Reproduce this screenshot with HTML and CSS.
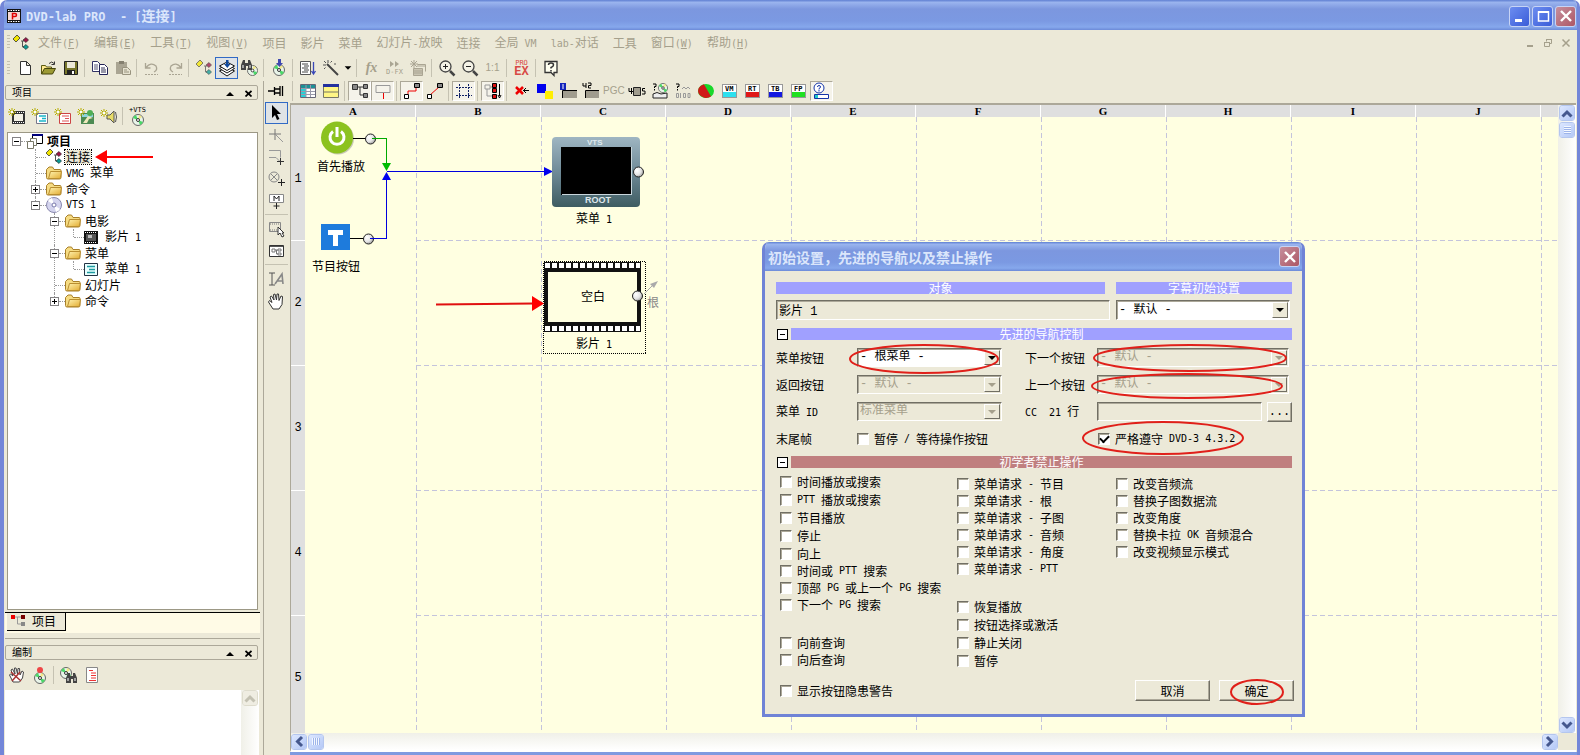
FILE: index.html
```html
<!DOCTYPE html>
<html lang="zh-CN">
<head>
<meta charset="utf-8">
<title>DVD-lab PRO</title>
<link rel="stylesheet" href="styles.css">
</head>
<body>
<svg class="defs" aria-hidden="true">
  <defs>
    <linearGradient id="gFolder" x1="0" y1="0" x2="1" y2="1"><stop offset="0" stop-color="#fff3b0"/><stop offset="1" stop-color="#e3ac32"/></linearGradient>
    <linearGradient id="gFrame" x1="0" y1="0" x2="0" y2="1"><stop offset="0" stop-color="#9fb6c2"/><stop offset=".5" stop-color="#6f8a97"/><stop offset="1" stop-color="#3e5c62"/></linearGradient>
    <radialGradient id="gBall" cx=".35" cy=".35" r=".7"><stop offset="0" stop-color="#fff"/><stop offset=".6" stop-color="#e4e4e4"/><stop offset="1" stop-color="#999"/></radialGradient>
    <symbol id="folder" viewBox="0 0 16 14"><path d="M.5 3.500v8q0 1.500 1.500 1.500h11.500q1.500 0 1.500-1.500v-7q0-1-1-1h-6l-1.500-2.500h-3.500z" fill="#f6dc83" stroke="#a87f28"/><path d="M2.500 12.500 4.500 5.500h11l-1 6q0 1-1.500 1z" fill="url(#gFolder)" stroke="#b98e30"/></symbol>
    <symbol id="links" viewBox="0 0 16 16"><path d="M8 6h3M9.500 6v6h2" stroke="#555" fill="none"/><path d="M0 4 4 0l3 3-4 4z" fill="#f2e500" stroke="#333" stroke-width=".8"/><path d="m10 5 3-2.500 2.500 2.500-2.500 2.500z" fill="#9b1547" stroke="#222" stroke-width=".6"/><path d="m10 12 3-2.500 2.500 2.500-2.500 2.500z" fill="#0b9a94" stroke="#222" stroke-width=".6"/></symbol>
    <symbol id="spark" viewBox="0 0 8 8"><path d="M4 0v8M0 4h8M1 1l6 6M7 1 1 7" stroke="#b5ad00" fill="none"/><path d="M3 3h2v2h-2z" fill="#fff"/></symbol>
    <symbol id="disc" viewBox="0 0 12 12"><circle cx="6" cy="6" r="5.500" fill="#e9f4e9" stroke="#666"/><path d="M6 6 1 4a5 5 0 0 1 3-3zM6 6l5 2a5 5 0 0 1-3 3z" fill="#4bd868"/><path d="M6 6 7 1a5 5 0 0 1 3 2z" fill="#f3e98a"/><circle cx="6" cy="6" r="1.500" fill="#fff" stroke="#333"/></symbol>
    <symbol id="cup" viewBox="0 0 8 6"><path d="M1 5 4 2l3 3" fill="none" stroke="currentColor" stroke-width="2"/></symbol>
    <symbol id="binoc" viewBox="0 0 12 10"><path d="M2 0h2v3h3V0h2l2 5v5H7V6H5v4H0V5z" fill="#444"/><path d="M2 5v3M9 5v3" stroke="#fff"/></symbol>
  </defs>
</svg>

<div class="window">
  <header class="titlebar">
    <svg class="app-icon" width="14" height="14" viewBox="0 0 14 14"><path d="M0 0h14v14H0z" fill="#111"/><path d="M1 1.500h12M1 12.500h12" stroke="#fff" stroke-dasharray="1.500 1"/><path d="M1 3h12v8H1z" fill="#f5d9d5"/><path d="M5.500 10.500v-6h2.500q1.500 0 1.500 1.500t-1.500 1.500h-2.500" fill="none" stroke="#d00" stroke-width="1.500"/></svg>
    <h1 class="caption"><span class="en">DVD-lab PRO&nbsp; - [</span>连接<span class="en">]</span></h1>
    <div class="sysbuttons">
      <button class="sys" aria-label="最小化"><svg width="18" height="18" viewBox="0 0 18 18"><path d="M4 12h7v3H4z" fill="#fff"/></svg></button>
      <button class="sys" aria-label="最大化"><svg width="18" height="18" viewBox="0 0 18 18"><path d="M4.500 5h10v9h-10zM4 5h11" fill="none" stroke="#fff" stroke-width="1.500"/><path d="M4 4h11v2H4z" fill="#fff"/></svg></button>
      <button class="sys sys-close" aria-label="关闭"><svg width="18" height="18" viewBox="0 0 18 18"><path d="m4 4 10 10M14 4 4 14" stroke="#fff" stroke-width="2.400"/></svg></button>
    </div>
  </header>

  <nav class="menubar">
    <span class="grip"></span>
    <svg class="doc-icon" width="16" height="16"><use href="#links"/></svg>
    <button>文件<span class="en">(<u>F</u>)</span></button>
    <button>编辑<span class="en">(<u>E</u>)</span></button>
    <button>工具<span class="en">(<u>T</u>)</span></button>
    <button>视图<span class="en">(<u>V</u>)</span></button>
    <button>项目</button>
    <button>影片</button>
    <button>菜单</button>
    <button>幻灯片<span class="en">-</span>放映</button>
    <button>连接</button>
    <button>全局<span class="en"> VM</span></button>
    <button><span class="en">lab-</span>对话</button>
    <button>工具</button>
    <button>窗口<span class="en">(<u>W</u>)</span></button>
    <button>帮助<span class="en">(<u>H</u>)</span></button>
    <div class="mdi">
      <svg width="10" height="10" viewBox="0 0 10 10"><path d="M2 7h6v2H2z" fill="#a5a08c"/></svg>
      <svg width="10" height="10" viewBox="0 0 10 10"><path d="M1.500 4.500h5v4h-5zM3.500 3.500v-2h5v4h-2M1 4.500h6M3 1.500h6" fill="none" stroke="#a5a08c"/></svg>
      <svg width="10" height="10" viewBox="0 0 10 10"><path d="m1.500 1.500 7 7M8.500 1.500l-7 7" stroke="#a5a08c" stroke-width="1.500"/></svg>
    </div>
  </nav>

  <div class="toolbar main-tools">
    <span class="grip"></span>
    <button class="tb" aria-label="新建"><svg viewBox="0 0 18 18"><path d="M4.500 2.500h6l4 4v9h-10zM10.500 2.500v4h4" fill="#fff" stroke="#333"/></svg></button>
    <button class="tb" aria-label="打开"><svg viewBox="0 0 18 18"><path d="M2.500 15V6.500h4l1 1.500h5v2" fill="#ffe98e" stroke="#5a5a10"/><path d="m2.500 15 3-5.500h11l-3 5.500z" fill="#9c9a34" stroke="#44440a"/><path d="M10 4.500q3-3 5 0M15.500 2.500v3h-3" fill="none" stroke="#333"/></svg></button>
    <button class="tb" aria-label="保存"><svg viewBox="0 0 18 18"><path d="M2.500 2.500h13v13h-13z" fill="#77762a" stroke="#222"/><path d="M5 3h8v6H5z" fill="#ece9d8"/><path d="M5 11h8v4H5z" fill="#222"/><path d="M10 12h2v3h-2z" fill="#fff"/></svg></button>
    <span class="sep"></span>
    <button class="tb" aria-label="复制"><svg viewBox="0 0 18 18"><path d="M1.500 2.500h5l3 3v7h-8z" fill="#fff" stroke="#336"/><path d="M3 6h4M3 8h4M3 10h4" stroke="#557"/><path d="M8.500 5.500h5l3 3v7h-8z" fill="#fff" stroke="#225"/><path d="M10 9h4M10 11h5M10 13h5" stroke="#335"/></svg></button>
    <button class="tb" aria-label="粘贴"><svg viewBox="0 0 18 18"><path d="M2 3h11v12H2z" fill="#aaa593"/><path d="M5 2h5v3H5z" fill="#858070"/><path d="M8.500 8.500h5l3 3v4h-8z" fill="#e6e2d0" stroke="#98937f"/><path d="M10 11h3M10 13h5" stroke="#98937f"/></svg></button>
    <span class="sep"></span>
    <button class="tb" aria-label="撤销"><svg viewBox="0 0 18 18"><path d="M2.500 4v5h5M3 8.500q5-6 10-1.500 2 4-2 6" fill="none" stroke="#aaa593" stroke-width="1.300"/><path d="M2 15.500h13" stroke="#aaa593" stroke-dasharray="2 1"/></svg></button>
    <button class="tb" aria-label="重做"><svg viewBox="0 0 18 18"><path d="M15.500 4v5h-5M15 8.500q-5-6-10-1.500-2 4 2 6" fill="none" stroke="#aaa593" stroke-width="1.300"/><path d="M3 15.500h13" stroke="#aaa593" stroke-dasharray="2 1"/></svg></button>
    <span class="sep"></span>
    <button class="tb" aria-label="连接"><svg viewBox="-1 -1 18 18"><use href="#links" width="16" height="16" opacity=".75"/></svg></button>
    <button class="tb active" aria-label="编译"><svg viewBox="0 0 18 18"><path d="m1.500 12 7.500-4 7.500 4L9 17z" fill="#fff" stroke="#111"/><path d="m1.500 9.500 7.500-4 7.500 4L9 14z" fill="#fff" stroke="#111"/><path d="m1.500 7 7.500-4 7.500 4L9 11.500z" fill="#fff" stroke="#111"/><path d="M8 1h2.500v4h2L9.300 9 6 5h2z" fill="#114a9e"/></svg></button>
    <button class="tb" aria-label="查看光盘"><svg viewBox="0 0 18 18"><use href="#disc" x="6" y="6" width="11" height="11"/><use href="#binoc" x="0" y="1" width="12" height="10"/></svg></button>
    <span class="sep"></span>
    <button class="tb" aria-label="刻录"><svg viewBox="0 0 18 18"><use href="#disc" x="3" y="5" width="12" height="12"/><path d="M8 0h3v4h2L9.500 8 6 4h2z" fill="#3f49b0"/></svg></button>
    <span class="sep"></span>
    <button class="tb" aria-label="列表"><svg viewBox="0 0 18 18"><path d="M1.500 2.500h10v13h-10z" fill="#fff" stroke="#555"/><path d="M3 5h6M5 7h5M3 9h6M5 11h5M3 13h6" stroke="#444"/><path d="M14.500 3v11M12.500 12l2 3 2-3" fill="none" stroke="#3a48b8" stroke-width="1.300"/></svg></button>
    <button class="tb" aria-label="向导"><svg viewBox="0 0 18 18"><path d="m5 5 11 11" stroke="#444" stroke-width="2"/><path d="M6 1v3M1 6h3M2 2l2 2M10 2 8.500 3.500M2 10l1.500-1.500M12 5h2" stroke="#555"/></svg></button>
    <button class="tb drop" aria-label="更多"><svg viewBox="0 0 12 18"><path d="M2 7h8l-4 4z" fill="#000"/></svg></button>
    <span class="sep"></span>
    <button class="tb gl"><em>fx</em></button>
    <button class="tb stack gl"><svg viewBox="0 0 12 8"><path d="M1 1v6l4-3zM6 1v6l4-3z" fill="#aaa593"/></svg><small>D-FX</small></button>
    <button class="tb" aria-label="新效果"><svg viewBox="0 0 18 18"><path d="M4.500 9.500h9v7h-9z" fill="#c9c4b2" stroke="#aaa593"/><path d="M8.500 5.500h8v7" fill="none" stroke="#aaa593"/><path d="M5 12h8M5 14h8M8 7h8" stroke="#aaa593"/><path d="M5 1v8M1 5h8M2 2l6 6M8 2 2 8" stroke="#aaa593"/></svg></button>
    <span class="sep"></span>
    <button class="tb" aria-label="放大"><svg viewBox="0 0 18 18"><circle cx="7.500" cy="7.500" r="5.500" fill="#f4f2e6" stroke="#444" stroke-width="1.300"/><path d="m12 12 4.500 4.500" stroke="#444" stroke-width="2.500"/><path d="M5 7.500h5M7.500 5v5" stroke="#222"/></svg></button>
    <button class="tb" aria-label="缩小"><svg viewBox="0 0 18 18"><circle cx="7.500" cy="7.500" r="5.500" fill="#f4f2e6" stroke="#444" stroke-width="1.300"/><path d="m12 12 4.500 4.500" stroke="#444" stroke-width="2.500"/><path d="M5 7.500h5" stroke="#222"/></svg></button>
    <button class="tb gl">1:1</button>
    <span class="sep"></span>
    <button class="tb stack ex"><small>PRO</small><b>EX</b></button>
    <span class="sep"></span>
    <button class="tb" aria-label="帮助"><svg viewBox="0 0 18 18"><path d="M3 2.500h12v11h-3v3l-3-3H3z" fill="#fffff0" stroke="#333" stroke-width="1.300"/><path d="M6.500 6q0-2 2.500-2t2.500 2q0 1.500-2.500 2.500v1M9 11v1.500" fill="none" stroke="#333" stroke-width="1.500"/></svg></button>
  </div>

  <div class="workspace">
    <aside class="dock">
      <div class="dock-head"><h2>项目</h2><svg width="8" height="5" viewBox="0 0 8 5"><path d="M0 5 4 1l4 4z"/></svg><svg width="7" height="7" viewBox="0 0 7 7"><path d="m.5 1 6 5.500M6.500 1l-6 5.500" stroke="#000" stroke-width="1.700"/></svg></div>
      <div class="toolbar dock-tools">
        <button class="tb" aria-label="新建影片"><svg viewBox="0 0 18 18"><path d="M4 4h13v13H4z" fill="#333"/><path d="M5 5.500h11M5 15.500h11" stroke="#fff" stroke-dasharray="1 1"/><path d="M6 7h9v7H6z" fill="#f4f2e6"/><use href="#spark" x="0" y="1" width="8" height="8"/></svg></button>
        <button class="tb" aria-label="新建菜单"><svg viewBox="0 0 18 18"><path d="M5.500 6.500h11v10h-11z" fill="#fff" stroke="#778"/><path d="M8 9h7M11 11.500h4M8 14h7" stroke="#1ab5c9" stroke-width="1.500"/><use href="#spark" x="0" y="1" width="8" height="8"/></svg></button>
        <button class="tb" aria-label="新建命令"><svg viewBox="0 0 18 18"><path d="M5.500 6.500h11v10h-11z" fill="#fff" stroke="#c44"/><path d="M8 9h7M11 11.500h4M8 14h7" stroke="#d55"/><use href="#spark" x="0" y="1" width="8" height="8"/></svg></button>
        <button class="tb" aria-label="新建幻灯片"><svg viewBox="0 0 18 18"><path d="M4 6h13v11H4z" fill="#4c8a52"/><path d="M5 7h11v3H5z" fill="#8fd3dc"/><path d="m6 16 5-7 5 2-4 1-2 4z" fill="#efe9bc"/><circle cx="13" cy="6" r="3" fill="#4fae55"/><use href="#spark" x="0" y="1" width="8" height="8"/></svg></button>
        <button class="tb" aria-label="新建音频"><svg viewBox="0 0 18 18"><path d="M7 8h3l4-4v12l-4-4H7z" fill="#e8dc68" stroke="#555"/><path d="M15.500 5q2 5 0 10" fill="none" stroke="#555"/><use href="#spark" x="0" y="2" width="8" height="8"/></svg></button>
        <span class="sep"></span>
        <button class="tb stack vts"><small>+VTS</small><svg viewBox="0 0 12 12"><use href="#disc" width="12" height="12"/></svg></button>
      </div>
      <div class="tree">
        <ul>
          <li><div class="row"><span class="tog"></span><svg width="16" height="16" viewBox="0 0 16 16"><path d="M5.500 1.500h10v9h-10z" fill="#fff" stroke="#000"/><path d="M5 1h11v2H5z" fill="#00007b"/><path d="M3.500 5.500h6v7h-6z" fill="#fff" stroke="#776"/><path d="M.5 8.500h6v7h-6z" fill="#fff" stroke="#776"/></svg><b>项目</b></div>
            <ul>
              <li><div class="row"><span class="tog none"></span><svg width="16" height="16"><use href="#links"/></svg><span class="sel">连接</span></div></li>
              <li><div class="row"><span class="tog none"></span><svg width="16" height="14"><use href="#folder"/></svg><span><span class="en">VMG </span>菜单</span></div></li>
              <li><div class="row"><span class="tog plus"></span><svg width="16" height="14"><use href="#folder"/></svg><span>命令</span></div></li>
              <li><div class="row"><span class="tog"></span><svg width="16" height="16" viewBox="0 0 16 16"><circle cx="8" cy="8" r="7.500" fill="#d4d4ee" stroke="#8887ad"/><path d="M8 8 2 4a7 7 0 0 1 4-3zM8 8l6 4a7 7 0 0 1-4 3z" fill="#fff"/><circle cx="8" cy="8" r="2" fill="#fff" stroke="#77a"/></svg><span class="en">VTS 1</span></div>
                <ul>
                  <li><div class="row"><span class="tog"></span><svg width="16" height="14"><use href="#folder"/></svg><span>电影</span></div>
                    <ul><li><div class="row"><span class="tog none"></span><svg width="14" height="13" viewBox="0 0 14 13"><path d="M0 0h14v13H0z" fill="#111"/><path d="M1 1.500h12M1 11.500h12" stroke="#fff" stroke-dasharray="1 1"/><path d="M2 3h10v7H2z" fill="#555"/><path d="M4 4h4v3H4z" fill="#bbb"/></svg><span class="far">影片<span class="en"> 1</span></span></div></li></ul></li>
                  <li><div class="row"><span class="tog"></span><svg width="16" height="14"><use href="#folder"/></svg><span>菜单</span></div>
                    <ul><li><div class="row"><span class="tog none"></span><svg width="14" height="13" viewBox="0 0 14 13"><path d="M.5.5h13v12H.5z" fill="#e9ffff" stroke="#234"/><path d="M3 3.500h8M5 6.500h6M3 9.500h8" stroke="#1d9aa0" stroke-width="1.500"/></svg><span class="far">菜单<span class="en"> 1</span></span></div></li></ul></li>
                  <li><div class="row"><span class="tog none"></span><svg width="16" height="14"><use href="#folder"/></svg><span>幻灯片</span></div></li>
                  <li><div class="row"><span class="tog plus"></span><svg width="16" height="14"><use href="#folder"/></svg><span>命令</span></div></li>
                </ul>
              </li>
            </ul>
          </li>
        </ul>
        <svg class="tree-arrow" width="60" height="16" viewBox="0 0 60 16"><path d="M10 8h49" stroke="#f00" stroke-width="2"/><path d="M1 8 13 1v14z" fill="#f00"/></svg>
      </div>
      <div class="tabs"><button class="tab"><svg width="15" height="12" viewBox="0 0 15 12"><path d="M3 2h8M6.500 2v7H11" fill="none" stroke="#999"/><path d="M0 0h4v4H0z" fill="#e00"/><path d="M10 0h4v4h-4z" fill="#700"/><path d="M10 7h4v4h-4z" fill="#888"/></svg>项目</button></div>
      <div class="splitter"></div>
      <div class="dock-head"><h2>编制</h2><svg width="8" height="5" viewBox="0 0 8 5"><path d="M0 5 4 1l4 4z"/></svg><svg width="7" height="7" viewBox="0 0 7 7"><path d="m.5 1 6 5.500M6.500 1l-6 5.500" stroke="#000" stroke-width="1.700"/></svg></div>
      <div class="toolbar dock-tools log-tools">
        <button class="tb" aria-label="停止"><svg viewBox="0 0 18 18"><path d="M5 16 1.500 9l1-1L5 10 3 4l1.500-1L7 8 6.500 2H8l1.500 6L10 2.500h1.500L12 9l2-4 1.500 1-1 6-3 4z" fill="#fff" stroke="#444"/><path d="m3 6 10 9M12 6l-8 9" stroke="#a33" stroke-width="1.500"/></svg></button>
        <button class="tb" aria-label="刻录"><svg viewBox="0 0 18 18"><use href="#disc" x="3" y="6" width="12" height="12"/><circle cx="9" cy="4" r="3" fill="#ee4646"/></svg></button>
        <span class="sep"></span>
        <button class="tb" aria-label="检查"><svg viewBox="0 0 18 18"><use href="#disc" x="0" y="1" width="12" height="12"/><use href="#binoc" x="6" y="7" width="12" height="10"/></svg></button>
        <button class="tb" aria-label="日志"><svg viewBox="0 0 18 18"><path d="M3.500 1.500h11v15h-11z" fill="#fff" stroke="#888"/><path d="M6 4.500h4M8 7h5M8 9.500h5M8 12h5M6 14.500h7" stroke="#e33"/></svg></button>
      </div>
      <div class="log"><div class="log-body"></div><div class="vscroll off"><button class="sb off" aria-label="向上"><svg width="12" height="9"><use href="#cup"/></svg></button></div></div>
    </aside>

    <div class="vtools">
      <button class="vb pin" aria-label="固定"><svg viewBox="0 0 18 18"><path d="M1 9h6M7.500 5v8M7 7h6M7 11h6M13 4v10M15.500 4v10" stroke="#000" stroke-width="1.300" fill="none"/></svg></button>
      <button class="vb active" aria-label="选择"><svg viewBox="0 0 18 18"><path d="M5 1v13l3-3 2 5 2.500-1-2.500-5h4z" fill="#000"/></svg></button>
      <button class="vb" aria-label="点"><svg viewBox="0 0 18 18"><path d="M8 3v11M2 8h12" stroke="#777"/><path d="m9 9 7 7" stroke="#999"/></svg></button>
      <button class="vb" aria-label="框"><svg viewBox="0 0 18 18"><path d="M2 2.500h11.500v7M2 9.500h7l4 4" fill="none" stroke="#999"/><path d="M13.500 10v7M10 13.500h7" stroke="#333"/></svg></button>
      <button class="vb" aria-label="圆"><svg viewBox="0 0 18 18"><circle cx="7" cy="7" r="5" fill="none" stroke="#888"/><path d="m4 4 6 6M10 4l-6 6" stroke="#888"/><path d="M14.500 9v7M11 12.500h7" stroke="#222"/></svg></button>
      <button class="vb" aria-label="菜单"><svg viewBox="0 0 18 18"><path d="M2.500 2.500h14v8h-14z" fill="#fff" stroke="#888"/><path d="M7 9V4l2.500 3L12 4v5" fill="none" stroke="#222"/><path d="M9.500 11v6M6.500 14h6" stroke="#222"/></svg></button>
      <span class="hsep"></span>
      <button class="vb" aria-label="影片"><svg viewBox="0 0 18 18"><path d="M2.500 2.500h11v9h-11z" fill="none" stroke="#888"/><path d="M3 4h10M3 10h10" stroke="#777" stroke-dasharray="1 1"/><path d="M11 7v8l2-2 2 4 2-1-2-3h2z" fill="#fff" stroke="#333"/></svg></button>
      <button class="vb" aria-label="窗口"><svg viewBox="0 0 18 18"><path d="M2.500 3.500h14v11h-14z" fill="#fff" stroke="#333"/><path d="M3 4.500h13" stroke="#555"/><path d="M5 7h3v3H5zM11 7h3v2h-3zM11 11h3v2h-3zM8 8h3M9.500 8v4H11" fill="none" stroke="#777"/></svg></button>
      <span class="hsep"></span>
      <button class="vb" aria-label="文字"><svg viewBox="0 0 18 18"><path d="M2 3h6M5 3v12M2 15h6" stroke="#555" fill="none"/><path d="m8 14 7-10 1 10M10 11h6" stroke="#888" stroke-width="1.600" fill="none"/></svg></button>
      <button class="vb" aria-label="抓手"><svg viewBox="0 0 18 18"><path d="M6 17 1.500 10l1-1.500L5 10.500 3 5l1.500-1L7 8 6.500 2.500 8 2l1.500 6 .5-6h1.500L12 8.500l2-4.500 1.500.5-.5 8-3 4.500z" fill="#fff" stroke="#333"/></svg></button>
    </div>

    <main class="editor">
      <div class="toolbar link-tools">
        <span class="sep"></span>
        <button class="tb" aria-label="表格"><svg viewBox="0 0 18 18"><path d="M1.500 2.500h15v13h-15z" fill="#fff" stroke="#667"/><path d="M2 3h5v12H2z" fill="#29cfd6"/><path d="M2 3h14v3H2z" fill="#1c8f95"/><path d="M2 6.500h14M2 9.500h14M2 12.500h14M7 3v12M11.500 3v12" stroke="#99a"/></svg></button>
        <button class="tb" aria-label="行"><svg viewBox="0 0 18 18"><path d="M1.500 2.500h15v13h-15z" fill="#fff685" stroke="#776"/><path d="M1 2h16v3H1z" fill="#23309e"/><path d="M2 10h14" stroke="#776"/></svg></button>
        <span class="sep"></span>
        <button class="tb pressed" aria-label="树"><svg viewBox="0 0 18 18"><path d="M5 5h8M9 5v8h4" fill="none" stroke="#333"/><path d="M1.500 2.500h5v5h-5zM12.500 2.500h4v4h-4zM12.500 11.500h4v4h-4z" fill="#888" stroke="#333"/></svg></button>
        <button class="tb pressed" aria-label="框"><svg viewBox="0 0 18 18"><path d="M2 3.500h14v7H2z" fill="none" stroke="#999"/><path d="M9.500 11v6" stroke="#e00"/></svg></button>
        <span class="sep"></span>
        <button class="tb pressed" aria-label="折线"><svg viewBox="0 0 18 18"><path d="M5 12V9h8V6" fill="none" stroke="#e00"/><path d="M1.500 12.500h4v4h-4z" fill="#fff" stroke="#000"/><path d="M11.500 1.500h5v4h-5z" fill="#888" stroke="#000"/></svg></button>
        <button class="tb" aria-label="直线"><svg viewBox="0 0 18 18"><path d="m4 13 9-8" stroke="#e00"/><path d="M1.500 12.500h4v4h-4z" fill="#fff" stroke="#000"/><path d="M11.500 1.500h5v4h-5z" fill="#888" stroke="#000"/></svg></button>
        <span class="sep"></span>
        <button class="tb pressed" aria-label="网格"><svg viewBox="0 0 18 18"><path d="M1 5.500h16M1 13.500h16M4.500 2v15M13.500 2v15" stroke="#126" stroke-dasharray="2 1"/></svg></button>
        <span class="sep"></span>
        <button class="tb pressed" aria-label="对齐"><svg viewBox="0 0 18 18"><path d="M1 3h5v4H1zM3 7v7h5M6 5h4" fill="none" stroke="#999"/><path d="M8.500 1.500h4v4h-4zM8.500 6.500h4v4h-4zM8.500 12.500h4v4h-4z" fill="#d11" stroke="#000"/><path d="M15.500 2v12M14 13l1.500 3 1.500-3" stroke="#000" fill="none"/></svg></button>
        <span class="sep"></span>
        <button class="tb" aria-label="删除"><svg viewBox="0 0 18 18"><path d="m3 5 7 7M10 5l-7 7" stroke="#e00" stroke-width="2.500"/><path d="M10 8.500h6M13 6l-2.500 2.500L13 11" stroke="#000" fill="none"/></svg></button>
        <button class="tb" aria-label="颜色"><svg viewBox="0 0 18 18"><path d="M1 2h9v9H1z" fill="#00e"/><path d="M9 9h8v8H9z" fill="#fe0"/></svg></button>
        <button class="tb" aria-label="编号"><svg viewBox="0 0 18 18"><path d="M1 1h6v7H1z" fill="#12b"/><path d="M4 2v5" stroke="#fff"/><path d="M4 9h14v7H4z" fill="#a09c8e"/><path d="M3.500 16V8.500H18" fill="none" stroke="#000"/></svg></button>
        <button class="tb" aria-label="数量"><svg viewBox="0 0 18 18"><path d="M1 1v3h3M4 1v5M6 1h3v2.500H6.500V6H9" fill="none" stroke="#000"/><path d="M4 9h13v7H4z" fill="#a09c8e"/><path d="M3.500 16V8.500H17" fill="none" stroke="#000"/></svg></button>
        <button class="tb gl">PGC</button>
        <button class="tb" aria-label="端口"><svg viewBox="0 0 18 18"><path d="M5.500 5.500h7v8h-7z" fill="#a09c8e" stroke="#222"/><path d="M3.500 6v6M1 6v3.500h4M17 6.500h-2.500v2.500H17v3h-3" fill="none" stroke="#000"/></svg></button>
        <button class="tb" aria-label="光驱"><svg viewBox="0 0 18 18"><use href="#disc" x="7" y="1" width="10" height="10"/><path d="M2 12q4-3 8 0l6-1v5H2z" fill="#eee" stroke="#222"/><path d="M2 2h3v2.500H3.500V6M3.500 7v1.500" fill="none" stroke="#000"/></svg></button>
        <button class="tb" aria-label="寄存器"><svg viewBox="0 0 18 18"><path d="M2 2h3v2.500H3.500V6M3.500 7v1.500" fill="none" stroke="#000"/><path d="M2.500 11.500h2v4h-2zM6.500 11v5M9.500 11.500h2v4h-2zM14 11.500h2v4h-2zM8 7l2-2 2 2 2-2 2 2" fill="none" stroke="#999"/></svg></button>
        <button class="tb" aria-label="状态"><svg viewBox="0 0 18 18"><ellipse cx="9" cy="9" rx="8" ry="7" fill="#18d82a"/><path d="M14 14.500A8 7 0 1 1 7 2.200z" fill="#d01818"/></svg></button>
        <button class="tb chip c-vm"><span>VM</span></button>
        <button class="tb chip c-rt"><span>RT</span></button>
        <button class="tb chip c-tb"><span>TB</span></button>
        <button class="tb chip c-fp"><span>FP</span></button>
        <button class="tb pressed" aria-label="提示"><svg viewBox="0 0 18 18"><circle cx="7" cy="6" r="5" fill="#fff" stroke="#1535a8"/><path d="M5.500 5q0-1.500 1.500-1.500T8.500 5Q8.500 6 7 6.500v1M7 8v1.500" fill="none" stroke="#1535a8"/><path d="M2.500 12.500h14v4h-14z" fill="#fff" stroke="#1535a8"/><path d="M3 13h3v3H3z" fill="#2cc"/></svg></button>
      </div>
      <div class="sheet">
        <div class="ruler-x"><span>A</span><span>B</span><span>C</span><span>D</span><span>E</span><span>F</span><span>G</span><span>H</span><span>I</span><span>J</span></div>
        <div class="ruler-y"><span>1</span><span>2</span><span>3</span><span>4</span><span>5</span></div>
        <div class="canvas">
          <svg class="graph">
            <g transform="translate(-305 -117)">
              <g stroke="#c4c4dc" stroke-dasharray="5 3">
                <path d="M416.500 117V1200M541.500 117V1200M666.500 117V1200M791.500 117V1200M916.500 117V1200M1041.500 117V1200M1166.500 117V1200M1291.500 117V1200M1416.500 117V1200M1541.500 117V1200"/>
                <path d="M416 240.500H3000M416 365.500H3000M416 490.500H3000M416 615.500H3000"/>
              </g>
              <circle cx="338" cy="138.500" r="16" fill="#777" opacity=".4"/>
              <circle cx="337" cy="137.500" r="16" fill="#8cc21f"/>
              <path d="M333 131.500a7 7 0 1 0 8 0M337 127v10" fill="none" stroke="#fff" stroke-width="3"/>
              <path d="M353 138.500h14M350 238.500h15" stroke="#000"/>
              <circle cx="370.500" cy="139" r="5" fill="url(#gBall)" stroke="#222"/>
              <circle cx="368.500" cy="239" r="5" fill="url(#gBall)" stroke="#222"/>
              <g shape-rendering="crispEdges">
                <path d="M372 138.500h14.500V164" fill="none" stroke="#0a0"/>
                <path d="M370 238.500h16.500V178M387 171.500h158" fill="none" stroke="#00d"/>
              </g>
              <path d="M382 163h9l-4.500 8z" fill="#0b0"/>
              <path d="M382 180h9l-4.500-8zM544 167v9l9-4.500z" fill="#00e"/>
              <path d="M321 224h29v26h-29z" fill="#1e7bdc"/>
              <path d="M328 230h15v5h-5v11h-5v-11h-5z" fill="#fff"/>
              <text x="317" y="171">首先播放</text>
              <text x="312" y="271">节目按钮</text>
              <rect x="552" y="137" width="88" height="70" rx="4" fill="url(#gFrame)"/>
              <path d="M561 147h71v48h-71z" fill="#000"/>
              <path d="M631.500 147v48M562 194.500h70" fill="none" stroke="#c9d6dc"/>
              <text class="cap" x="587" y="145">VTS</text>
              <text class="cap root" x="585" y="203">ROOT</text>
              <circle cx="638.500" cy="172" r="5" fill="url(#gBall)" stroke="#222"/>
              <text x="576" y="223">菜单<tspan class="en" xml:space="preserve"> 1</tspan></text>
              <path d="M543.500 261.500h102v92h-102z" fill="none" stroke="#000" stroke-dasharray="1 1" shape-rendering="crispEdges"/>
              <path d="M544 262h97v70h-97z" fill="#111"/>
              <path d="M545 265.500h95M545 328.500h95" stroke="#fff" stroke-width="5" stroke-dasharray="5 2"/>
              <path d="M548 272h89v50h-89z" fill="#ffffe1"/>
              <circle cx="637.500" cy="296" r="5" fill="url(#gBall)" stroke="#222"/>
              <path d="m644 294 8-8" stroke="#aaa"/><path d="m658 281-8 3 4 4z" fill="#aaa"/>
              <text x="581" y="301">空白</text>
              <text class="gray" x="647" y="307">根</text>
              <text x="576" y="348">影片<tspan class="en" xml:space="preserve"> 1</tspan></text>
              <path d="m436 304.500 98-1" stroke="#e01010" stroke-width="2"/>
              <path d="M532 296v15l12-7.500z" fill="#f00"/>
            </g>
          </svg>
        </div>
        <div class="vscroll">
          <button class="sb" aria-label="向上"><svg width="12" height="9"><use href="#cup"/></svg></button>
          <span class="thumb"></span>
          <span class="grow"></span>
          <button class="sb down" aria-label="向下"><svg width="12" height="9"><use href="#cup"/></svg></button>
        </div>
        <div class="hscroll">
          <button class="sb left" aria-label="向左"><svg width="12" height="9"><use href="#cup"/></svg></button>
          <span class="thumb h"></span>
          <span class="grow"></span>
          <button class="sb right" aria-label="向右"><svg width="12" height="9"><use href="#cup"/></svg></button>
        </div>
      </div>
    </main>
  </div>
</div>

<form class="dialog" onsubmit="return false">
  <div class="dlg-title"><h2>初始设置，先进的导航以及禁止操作</h2>
    <button type="button" class="sys sys-close" aria-label="关闭"><svg width="18" height="18" viewBox="0 0 18 18"><path d="m4 4 10 10M14 4 4 14" stroke="#fff" stroke-width="2.400"/></svg></button></div>
  <div class="dlg-body">
    <div class="top-grid">
      <label class="band" for="obj">对象</label><label class="band" for="sub">字幕初始设置</label>
      <input id="obj" class="field" value="影片 1" readonly>
      <span class="combo"><select id="sub"><option>- 默认 -</option></select><i class="arrow"></i></span>
    </div>
    <div class="section"><button type="button" class="fold" aria-label="折叠"></button><h3 class="band">先进的导航控制</h3></div>
    <div class="nav-grid">
      <label for="f1">菜单按钮</label>
      <span class="combo"><select id="f1"><option>- 根菜单 -</option></select><i class="arrow"></i></span>
      <label for="f2" class="r">下一个按钮</label>
      <span class="combo dis wide"><select id="f2" disabled><option>- 默认 -</option></select><i class="arrow"></i></span>
      <label for="f3">返回按钮</label>
      <span class="combo dis"><select id="f3" disabled><option>- 默认 -</option></select><i class="arrow"></i></span>
      <label for="f4" class="r">上一个按钮</label>
      <span class="combo dis wide"><select id="f4" disabled><option>- 默认 -</option></select><i class="arrow"></i></span>
      <label for="f5">菜单<span class="en"> ID</span></label>
      <span class="combo dis"><select id="f5" disabled><option>标准菜单</option></select><i class="arrow"></i></span>
      <label for="f6" class="r"><span class="en">CC&nbsp; 21 </span>行</label>
      <span class="cc"><input id="f6" class="field"><button type="button" class="btn dots">...</button></span>
      <span>末尾帧</span>
      <label class="ck"><input type="checkbox">暂停<span class="en"> / </span>等待操作按钮</label>
      <span></span>
      <label class="ck strict"><input type="checkbox" checked>严格遵守<span class="en"> DVD-3 4.3.2</span></label>
    </div>
    <div class="section"><button type="button" class="fold" aria-label="折叠"></button><h3 class="band red">初学者禁止操作</h3></div>
    <div class="ops">
      <div class="col c1">
        <div class="grp roomy">
          <label class="ck"><input type="checkbox">时间播放或搜索</label>
          <label class="ck"><input type="checkbox"><span class="en">PTT </span>播放或搜索</label>
          <label class="ck"><input type="checkbox">节目播放</label>
          <label class="ck"><input type="checkbox">停止</label>
        </div>
        <div class="grp">
          <label class="ck"><input type="checkbox">向上</label>
          <label class="ck"><input type="checkbox">时间或<span class="en"> PTT </span>搜索</label>
          <label class="ck"><input type="checkbox">顶部<span class="en"> PG </span>或上一个<span class="en"> PG </span>搜索</label>
          <label class="ck"><input type="checkbox">下一个<span class="en"> PG </span>搜索</label>
        </div>
        <div class="grp apart">
          <label class="ck"><input type="checkbox">向前查询</label>
          <label class="ck"><input type="checkbox">向后查询</label>
        </div>
      </div>
      <div class="col">
        <div class="grp">
          <label class="ck"><input type="checkbox">菜单请求<span class="en"> - </span>节目</label>
          <label class="ck"><input type="checkbox">菜单请求<span class="en"> - </span>根</label>
          <label class="ck"><input type="checkbox">菜单请求<span class="en"> - </span>子图</label>
          <label class="ck"><input type="checkbox">菜单请求<span class="en"> - </span>音频</label>
          <label class="ck"><input type="checkbox">菜单请求<span class="en"> - </span>角度</label>
          <label class="ck"><input type="checkbox">菜单请求<span class="en"> - PTT</span></label>
        </div>
        <div class="grp roomy apart">
          <label class="ck"><input type="checkbox">恢复播放</label>
          <label class="ck"><input type="checkbox">按钮选择或激活</label>
          <label class="ck"><input type="checkbox">静止关闭</label>
          <label class="ck"><input type="checkbox">暂停</label>
        </div>
      </div>
      <div class="col">
        <div class="grp">
          <label class="ck"><input type="checkbox">改变音频流</label>
          <label class="ck"><input type="checkbox">替换子图数据流</label>
          <label class="ck"><input type="checkbox">改变角度</label>
          <label class="ck"><input type="checkbox">替换卡拉<span class="en"> OK </span>音频混合</label>
          <label class="ck"><input type="checkbox">改变视频显示模式</label>
        </div>
      </div>
    </div>
    <div class="actions">
      <label class="ck"><input type="checkbox">显示按钮隐患警告</label>
      <button type="button" class="btn">取消</button>
      <button type="submit" class="btn">确定</button>
    </div>
  </div>
  <svg class="marks" viewBox="762 242 543 475"><g fill="none" stroke="#e0201a" stroke-width="2"><ellipse cx="924" cy="359" rx="74" ry="14"/><ellipse cx="1190" cy="358" rx="96" ry="13"/><ellipse cx="1187" cy="386" rx="95" ry="12"/><ellipse cx="1163" cy="438" rx="80" ry="16"/><ellipse cx="1257" cy="692" rx="26" ry="12"/></g></svg>
</form>
</body>
</html>
```
FILE: styles.css
```css
* { box-sizing: border-box; }
body {
  margin: 0;
  background: #fff;
  color: #000;
  font: 12px/16px "Noto Sans CJK SC", sans-serif;
}
button, input, select { font: inherit; color: inherit; margin: 0; }
button { padding: 0; border: 0; background: none; }
h1, h2, h3, ul { margin: 0; padding: 0; font-size: inherit; font-weight: inherit; list-style: none; }
svg { display: block; flex: none; }
.defs { position: absolute; width: 0; height: 0; }
.en { font-family: "DejaVu Sans Mono", monospace; font-size: 10px; white-space: pre; }

.window {
  height: 100vh;
  display: flex;
  flex-direction: column;
  overflow: hidden;
  background: #ece9d8;
  border: solid #7386d8;
  border-width: 0 3px 0 4px;
  border-radius: 7px 7px 0 0;
}
.titlebar, .dlg-title {
  display: flex;
  align-items: center;
  background: linear-gradient(#5f7fd2, #9ab4ee 8%, #7c97df 30%, #7b99e2 70%, #86a8ec 90%, #6c8ad8);
  color: #dbe6fb;
}
.titlebar { flex: 0 0 30px; margin: 0 -3px 0 -4px; padding: 2px 4px 0 7px; gap: 5px; }
.caption { flex: 1; font-size: 14px; font-weight: bold; }
.caption .en { font-size: 12px; }
.sysbuttons { display: flex; gap: 2px; }
.sys {
  width: 21px;
  height: 21px;
  display: grid;
  place-items: center;
  border: 1px solid #c7d4f5;
  border-radius: 3px;
  background: linear-gradient(135deg, #6c8df0, #3a5cd8);
}
.sys-close { background: linear-gradient(135deg, #c68f9d, #ad5665); }

.menubar { flex: 0 0 25px; display: flex; align-items: center; padding-left: 3px; color: #a5a08c; }
.menubar button { padding: 0 7px; white-space: nowrap; }
.grip { width: 3px; height: 15px; margin-right: 3px; background: repeating-linear-gradient(#c5c1ae 0 1px, transparent 1px 3px); }
.mdi { margin-left: auto; padding-right: 6px; display: flex; gap: 8px; }
.doc-icon { margin-right: 2px; }

.toolbar { display: flex; align-items: center; }
.main-tools { flex: 0 0 26px; padding-left: 3px; }
.tb { flex: 0 0 23px; height: 22px; display: grid; place-items: center; border: 1px solid transparent; }
.tb svg { width: 18px; height: 18px; }
.tb.drop { flex-basis: 12px; }
.tb.drop svg { width: 10px; }
.tb.active, .vb.active { border-color: #316ac5; background: #dfe3e6; }
.tb.pressed { border-color: #aca899 #fff #fff #aca899; background: #f5f3ea; }
.sep { flex: 0 0 6px; height: 18px; background: linear-gradient(90deg, transparent 2px, #c5c2b2 2px 3px, transparent 3px); }
.gl { font: 10px/12px "Liberation Sans", sans-serif; color: #a5a08c; }
.gl em { font: italic bold 14px/14px "Liberation Serif", serif; }
.tb.stack { align-content: center; }
.stack small { font: 7px/8px "DejaVu Sans Mono", monospace; }
.stack.gl svg { width: 12px; height: 8px; }
.stack b { font: bold 12px/11px "Liberation Mono", monospace; }
.ex { color: #d84a44; }
.tb.vts svg { width: 12px; height: 12px; }
.chip span { width: 15px; height: 14px; border: 1px solid #999; background: linear-gradient(#fff 60%, var(--tone) 60%); font: bold 7px/8px "DejaVu Sans Mono", monospace; }
.c-vm { --tone: #2de0ee; }
.c-rt { --tone: #e01818; }
.c-tb { --tone: #1418e0; }
.c-fp { --tone: #20e020; }

.workspace { flex: 1; min-height: 0; display: grid; grid-template-columns: 259px 27px minmax(0, 1fr); }
.dock { min-height: 0; display: flex; flex-direction: column; padding: 4px 4px 0 1px; }
.dock-head {
  flex: 0 0 15px;
  display: flex;
  align-items: center;
  gap: 11px;
  padding: 2px 5px 0 6px;
  margin-right: 1px;
  border: 1px solid #aca899;
  border-radius: 2px;
}
.dock-head h2 { flex: 1; align-self: flex-start; font-size: 10px; line-height: 8px; }
.dock-tools { flex: 0 0 32px; }
.log-tools { flex-basis: 30px; }
.tree {
  position: relative;
  flex: 1;
  min-height: 0;
  margin: 0 1px 0 2px;
  padding-left: 4px;
  border: 1px solid #9c9885;
  background: #fff;
}
.tree ul ul { padding-left: 19px; }
.tree li { position: relative; }
.tree ul ul > li::before { content: ""; position: absolute; left: 4px; top: 0; bottom: 0; border-left: 1px dotted #999; }
.tree ul ul > li:last-child::before { bottom: auto; height: 8px; }
.row { display: flex; align-items: center; height: 16px; white-space: nowrap; }
.row svg { margin: 0 4px 0 6px; }
.row .far { padding-left: 3px; }
.tog, .fold {
  --bar: linear-gradient(#000, #000) center / 5px 1px no-repeat;
  position: relative;
  flex: 0 0 9px;
  height: 9px;
  border: 1px solid #848284;
  background: var(--bar), #fff;
}
.tog.plus { background: var(--bar), linear-gradient(#000, #000) center / 1px 5px no-repeat, #fff; }
.tog::after { content: ""; position: absolute; left: 8px; top: 3px; width: 6px; border-top: 1px dotted #999; }
.tog.none { border-color: transparent; background: none; }
.tog.none::after { left: 4px; width: 10px; }
.sel { outline: 1px dotted #000; background: #ece9d8; line-height: 14px; padding: 0 1px; margin-left: -1px; }
.tree-arrow { position: absolute; left: 86px; top: 16px; }
.tabs { flex: 0 0 21px; margin: 2px -1px 0 0; border-top: 1px solid #000; background: #fffbe6; padding-left: 2px; }
.tab { height: 18px; display: flex; align-items: center; gap: 6px; padding: 0 9px 2px 4px; background: #ece9d8; border: solid #000; border-width: 0 1px 1px 0; line-height: 14px; }
.splitter { flex: 0 0 1px; margin: 5px -1px 6px 0; background: #aca899; }
.log { flex: 0 0 65px; display: flex; background: #fff; }
.log-body { flex: 1; }

.vtools { display: flex; flex-direction: column; align-items: center; padding-right: 2px; border-left: 1px solid #aca899; }
.vb { flex: none; width: 23px; height: 22px; display: grid; place-items: center; border: 1px solid transparent; }
.vb svg { width: 18px; height: 18px; }
.vb.pin { height: 18px; margin-bottom: 3px; }
.hsep { flex: 0 0 6px; width: 23px; background: linear-gradient(transparent 2px, #c5c2b2 2px 3px, transparent 3px); }

.editor { min-width: 0; min-height: 0; display: flex; flex-direction: column; border-bottom: 3px solid #7f9ae0; }
.link-tools { flex: 0 0 22px; align-items: flex-start; }
.link-tools .tb, .link-tools .sep { height: 20px; }
.sheet {
  flex: 1;
  min-height: 0;
  display: grid;
  grid-template-columns: 14px minmax(0, 1fr) 18px;
  grid-template-rows: 12px minmax(0, 1fr) 17px;
  border: solid;
  border-width: 2px 0 2px 1px;
  border-color: #aca899 #fff #fff #aca899;
  margin-right: 1px;
}
.ruler-x, .ruler-y { display: flex; overflow: hidden; background: #dfdfdf; text-align: center; }
.ruler-x { grid-column: 1 / 3; font: bold 11px/13px "Liberation Serif", serif; }
.ruler-x span { flex: 0 0 125px; border-right: 1px solid #fff; }
.ruler-y { grid-column: 1; grid-row: 2; flex-direction: column; font: 12px/16px "Liberation Mono", monospace; }
.ruler-y span { flex: 0 0 125px; display: grid; place-items: center; border-bottom: 1px solid #fff; }
.ruler-y span:first-child { flex-basis: 124px; }
.canvas { background: #ffffe1; overflow: hidden; }
.graph { width: 100%; height: 100%; font-size: 12px; }
.graph .cap { font: bold 8px "Liberation Sans", sans-serif; fill: #dfe8ec; }
.graph .root { font-size: 9px; }
.graph .gray { fill: #888; }
.vscroll { width: 18px; display: flex; flex-direction: column; align-items: center; background: linear-gradient(90deg, #f0f0e8, #fff); }
.sheet .vscroll { grid-column: 3; grid-row: 1 / 3; }
.hscroll { grid-column: 1 / 3; grid-row: 3; display: flex; align-items: center; background: linear-gradient(#f0f0e8, #fff); }
.sb, .thumb { flex: none; width: 16px; height: 16px; display: grid; place-items: center; border: 1px solid #fff; border-radius: 3px; outline: 1px solid #b4c6ee; outline-offset: -1px; background: linear-gradient(135deg, #dce7ff, #b4c8f6); color: #45588e; }
.sb.off { background: #efede2; outline-color: #dedccd; color: #c3c1b2; }
.down svg { transform: rotate(180deg); }
.left svg { transform: rotate(-90deg); }
.right svg { transform: rotate(90deg); }
.thumb { margin-top: 1px; }
.thumb::after { content: ""; width: 7px; height: 8px; background: repeating-linear-gradient(#f4f8ff 0 1px, #9db4ea 1px 2px); }
.thumb.h { margin: 0 0 0 1px; }
.thumb.h::after { width: 8px; height: 7px; background: repeating-linear-gradient(90deg, #f4f8ff 0 1px, #9db4ea 1px 2px); }
.grow { flex: 1; }

.dialog {
  position: absolute;
  left: 762px;
  top: 242px;
  width: 543px;
  border: 3px solid #6f83d6;
  border-top: 0;
  border-radius: 7px 7px 0 0;
  background: #ece9d8;
  overflow: hidden;
}
.dlg-title { height: 29px; margin: 0 -3px; padding: 0 5px 0 6px; }
.dlg-title h2 { flex: 1; font-size: 14px; font-weight: bold; white-space: nowrap; }
.dlg-body { padding: 11px 8px 13px 11px; }
.top-grid { display: grid; grid-template-columns: 334px 174px; column-gap: 6px; row-gap: 6px; }
.band { height: 12px; line-height: 12px; background: #a0a0ff; color: #fff; text-align: center; }
.top-grid .band:first-child { margin-right: 5px; }
.top-grid .band:nth-child(2) { margin-right: -2px; }
.band.red { background: #c07f7f; }
.field, .combo { height: 20px; border: 1px solid; border-color: #716f64 #fff #fff #716f64; box-shadow: inset 1px 1px #aca899; }
.field, .combo select { font-family: "Liberation Mono", "Noto Sans CJK SC", monospace; }
.field { min-width: 0; padding: 0 2px; background: #ece9d8; border-radius: 0; outline: 0; }
.combo { display: flex; background: #fff; padding: 1px; }
.combo select { flex: 1; min-width: 0; appearance: none; border: 0; background: none; padding: 0 1px; line-height: 15px; opacity: 1; }
.combo.dis { background: #ece9d8; color: #a5a08c; }
.arrow { flex: 0 0 16px; display: grid; place-items: center; background: #ece9d8; border: 1px solid; border-color: #fff #716f64 #716f64 #fff; }
.arrow::after { content: ""; border: 4px solid transparent; border-top-color: currentColor; border-bottom: 0; }
.section { display: flex; align-items: center; gap: 3px; margin: 8px 2px 0 0; }
.section .band { flex: 1; }
.fold { flex-basis: 11px; height: 11px; margin-left: 1px; border-color: #000; }
.nav-grid { display: grid; grid-template-columns: 81px 145px 95px 195px; grid-auto-rows: 27px; align-items: center; margin-top: 4px; }
.nav-grid .combo { height: 19px; }
.nav-grid .wide { width: 192px; }
.nav-grid .r { padding-left: 23px; }
.cc { display: flex; gap: 5px; }
.cc .field { flex: 1; height: 19px; }
.ck { display: flex; align-items: center; white-space: pre; }
.ck input {
  appearance: none;
  flex: none;
  width: 12px;
  height: 12px;
  margin-right: 5px;
  display: grid;
  place-items: center;
  background: #fff;
  border: 1px solid;
  border-color: #716f64 #fff #fff #716f64;
  box-shadow: inset 1px 1px #aca899;
}
.strict { padding-left: 1px; }
.ck input:checked::after { content: ""; width: 7px; height: 4px; border: solid #000; border-width: 0 0 2px 2px; rotate: -45deg; translate: 0 -1px; }
.nav-grid + .section { margin-top: 4px; }
.ops { display: grid; grid-template-columns: 177px 159px 1fr; padding: 5px 0 0 4px; }
.col { padding-top: 2px; }
.c1 { padding-top: 0; }
.grp .ck { height: 17px; }
.roomy .ck { height: 18px; }
.apart { margin-top: 21px; }
.actions { display: flex; align-items: center; gap: 9px; padding-left: 4px; margin-top: 10px; }
.actions .ck { flex: 1; }
.btn { width: 75px; height: 21px; background: #ece9d8; border: 1px solid; border-color: #fff #716f64 #716f64 #fff; box-shadow: inset -1px -1px #aca899; }
.btn.dots { width: 25px; height: 20px; font-family: "Liberation Mono", monospace; }
.marks { position: absolute; left: -3px; top: 0; width: 543px; height: 475px; pointer-events: none; }
```
